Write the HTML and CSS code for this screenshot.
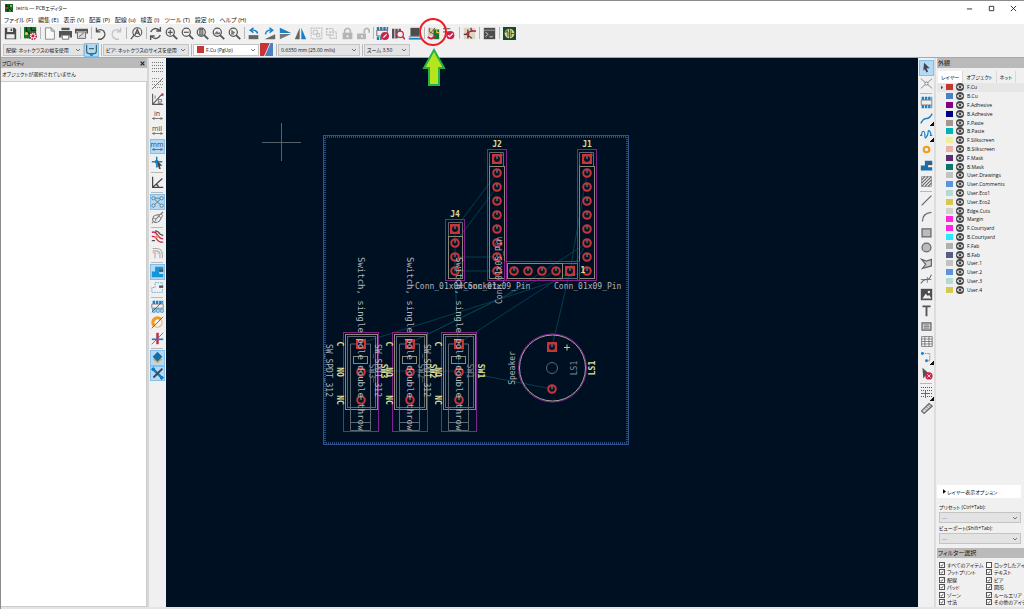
FILE: index.html
```html
<!DOCTYPE html>
<html lang="ja">
<head>
<meta charset="utf-8">
<title>tetris — PCBエディター</title>
<link rel="stylesheet" href="styles.css">
</head>
<body>
<svg class="defs" aria-hidden="true">
  <symbol id="lens" viewBox="0 0 16 16"><circle cx="6.5" cy="6.5" r="5" fill="none" stroke="#545454" stroke-width="1.5"/><path d="M10 10l5 5" stroke="#545454" stroke-width="2.2"/></symbol>
  <symbol id="eye" viewBox="0 0 16 16"><circle cx="8" cy="8" r="8" fill="#474747"/><path d="M1.500 8q6.500-8 13 0q-6.500 8-13 0z" fill="#f4f4f4"/><circle cx="8" cy="8" r="2.800" fill="#474747"/></symbol>
  <g id="pin"><circle r="3.8" fill="#06172a" stroke="#c93437" stroke-width="2"/><path d="M0-3V0" stroke="#8398a6" stroke-width="1"/></g>
  <g id="pin1"><rect x="-5" y="-5" width="10" height="10" fill="#c93437"/><circle r="3" fill="#06172a"/><path d="M0-3V0" stroke="#8398a6" stroke-width="1"/></g>
  <g id="switch">
    <rect x="-17.500" y="-11.500" width="35" height="99" fill="none" stroke="#84218f"/>
    <rect x="-15.500" y="-9.500" width="32" height="75" fill="none" stroke="#8a8978"/>
    <rect x="-13.500" y="-7.500" width="28" height="71" fill="none" stroke="#5e6670"/>
    <path d="M-10.500 0V86.500H9.500V0ZM-10.500 78.500H9.500" fill="none" stroke="#5e6670"/>
    <rect x="-7.500" y="12.500" width="14" height="7" fill="none" stroke="#8a8978"/>
    <use href="#pin1"/><use href="#pin" y="28"/><use href="#pin" y="56"/>
  </g>
  <g id="header9">
    <rect x="-9.500" y="-9.500" width="19" height="131" fill="none" stroke="#84218f"/>
    <rect x="-7.500" y="7.500" width="15" height="112" fill="none" stroke="#8a8978"/>
    <path d="M-7.500 7V-6.500H6.500V7M3-6.500L6.500-3" fill="none" stroke="#626a70"/>
    <use href="#pin1"/><use href="#pin" y="14"/><use href="#pin" y="28"/><use href="#pin" y="42"/><use href="#pin" y="56"/><use href="#pin" y="70"/><use href="#pin" y="84"/><use href="#pin" y="98"/><use href="#pin" y="112"/>
  </g>
</svg>

<div class="window">
<header class="titlebar">
  <svg class="logo" viewBox="0 0 16 16"><path fill="#176a29" d="M0 0h16v16H0z"/><path d="M3 1v5h4M9 1v4h5M2 10h4v5M8 8l6 6" stroke="#071d0c" stroke-width="2" fill="none"/><circle cx="4" cy="8" r="2" fill="#e53d2e"/><circle cx="12" cy="4" r="2" fill="#e8c840"/><circle cx="10" cy="13" r="2" fill="#37a64a"/></svg>
  <h1>tetris — PCBエディター</h1>
  <div class="winbtns">
    <button aria-label="最小化"><svg viewBox="0 0 8 8"><path d="M1 4.500h6" stroke="#222"/></svg></button>
    <button aria-label="最大化"><svg viewBox="0 0 8 8"><path d="M1.500 1.500h5v5h-5z" stroke="#222" fill="none"/></svg></button>
    <button aria-label="閉じる"><svg viewBox="0 0 8 8"><path d="M1 1l6 6M7 1L1 7" stroke="#222"/></svg></button>
  </div>
</header>
<nav class="menubar">
  <button>ファイル (F)</button><button>編集 (E)</button><button>表示 (V)</button><button>配置 (P)</button><button>配線 (u)</button><button>検査 (I)</button><button>ツール (T)</button><button>設定 (r)</button><button>ヘルプ (H)</button>
</nav>

<div class="toolbar main">
  <div class="group n1"><button aria-label="保存"><svg viewBox="0 0 16 16"><path d="M1 1h12l2 2v12H1z" fill="#4b4b4b"/><path d="M4 1h7v5H4zM3 9h10v5H3z" fill="#eee"/><path d="M8 2h2v3H8z" fill="#4b4b4b"/></svg></button></div><i></i>
  <div class="group n1"><button aria-label="基板の設定"><svg viewBox="0 0 16 16"><path d="M0 0h15v14H0z" fill="#19742b"/><path d="M3 0v5l4 3v6M9 0v4h6" stroke="#082d12" stroke-width="1.500" fill="none"/><circle cx="3" cy="8" r="2" fill="#e6c54f"/><circle cx="11" cy="11" r="4" fill="#fff" stroke="#c9234b" stroke-width="2" stroke-dasharray="2 1"/><circle cx="11" cy="11" r="2" fill="#c9234b"/></svg></button></div><i></i>
  <div class="group n3">
    <button aria-label="ページ設定"><svg viewBox="0 0 16 16"><path d="M3 1h7l4 4v10H3z" fill="#f8f8f8" stroke="#777"/><path d="M10 1v4h4" fill="none" stroke="#777"/></svg></button>
    <button aria-label="印刷"><svg viewBox="0 0 16 16"><path d="M3 1h10v3H3zM0 5h16v8h-3v-3H3v3H0z" fill="#545454"/><path d="M4 10h8v5H4z" fill="#fff" stroke="#545454"/></svg></button>
    <button aria-label="プロット"><svg viewBox="0 0 16 16"><path d="M0 2h16v6h-2V5H2v3H0z" fill="#545454"/><path d="M3 6h10v8H3z" fill="#ddd" stroke="#545454"/><path d="M5 12l6-5" stroke="#545454"/></svg></button>
  </div><i></i>
  <div class="group n2">
    <button aria-label="元に戻す"><svg viewBox="0 0 16 16"><path d="M3 1v5h5M3 6q4-5 9-1q4 6-3 10H5" fill="none" stroke="#555" stroke-width="1.700"/></svg></button>
    <button aria-label="やり直し"><svg viewBox="0 0 16 16"><path d="M13 1v5H8M13 6Q9 1 4 5q-4 6 3 10h4" fill="none" stroke="#c2c2c2" stroke-width="1.700"/></svg></button>
  </div><i></i>
  <div class="group n1"><button aria-label="検索"><svg viewBox="0 0 16 16"><circle cx="9" cy="6.500" r="5.500" fill="none" stroke="#555" stroke-width="1.300"/><path d="M5 10l-4 5M6 10l3-7 3 7M7 7.500h4" fill="none" stroke="#555" stroke-width="1.600"/></svg></button></div><i></i>
  <div class="group n6">
    <button aria-label="再描画"><svg viewBox="0 0 16 16"><path d="M2 6q4-7 11-2M14 0v5H9M14 10q-4 7-11 2M2 16v-5h5" fill="none" stroke="#555" stroke-width="1.700"/></svg></button>
    <button aria-label="拡大"><svg viewBox="0 0 16 16"><use href="#lens"/><path d="M3.500 6.500h6M6.500 3.500v6" stroke="#555" stroke-width="1.500"/></svg></button>
    <button aria-label="縮小"><svg viewBox="0 0 16 16"><use href="#lens"/><path d="M3.500 6.500h6" stroke="#555" stroke-width="1.500"/></svg></button>
    <button aria-label="全体表示"><svg viewBox="0 0 16 16"><use href="#lens"/><path d="M4.500 3h4v7h-4z" fill="#999" stroke="#555"/></svg></button>
    <button aria-label="オブジェクトに合わせる"><svg viewBox="0 0 16 16"><use href="#lens"/><path d="M3 8l3-3 2 2 2-1v3H3z" fill="#777"/></svg></button>
    <button aria-label="選択範囲を拡大"><svg viewBox="0 0 16 16"><use href="#lens"/><path d="M4 3l5 4-2 1 1 2-2-1-2 1z" fill="#777"/></svg></button>
  </div><i></i>
  <div class="group n8">
    <button aria-label="反時計回り"><svg viewBox="0 0 16 16"><path d="M2 15v-5h12v5z" fill="#666"/><path d="M13 8Q12 3 5 4M8 1L4 4l4 3" fill="none" stroke="#1a81c4" stroke-width="1.800"/></svg></button>
    <button aria-label="時計回り"><svg viewBox="0 0 16 16"><path d="M15 15V9L2 15z" fill="#666"/><path d="M3 9Q4 3 11 4M8 1l4 3-4 3" fill="none" stroke="#1a81c4" stroke-width="1.800"/></svg></button>
    <button aria-label="上下反転"><svg viewBox="0 0 16 16"><path d="M1 1l14 6.500H1z" fill="#1a81c4"/><path d="M1 15l14-6.500H1z" fill="#777"/></svg></button>
    <button aria-label="左右反転"><svg viewBox="0 0 16 16"><path d="M7 1v14H1z" fill="#666"/><path d="M9 1v14h6z" fill="#1a81c4"/></svg></button>
    <button aria-label="グループ化"><svg viewBox="0 0 16 16"><path d="M1.500 1.500h13v13h-13z" fill="none" stroke="#c0c0c0" stroke-width="1.500" stroke-dasharray="2 1"/><path d="M4 4h5v5H4zM8 8h4v4H8z" fill="none" stroke="#b8b8b8"/></svg></button>
    <button aria-label="グループ解除"><svg viewBox="0 0 16 16"><path d="M2 2h8v8H2zM6 6h8v8H6z" fill="none" stroke="#bdbdbd" stroke-width="1.500" stroke-dasharray="2 1"/></svg></button>
    <button aria-label="ロック"><svg viewBox="0 0 16 16"><path d="M4.500 8V4q3.500-5 7 0v4" fill="none" stroke="#b5b5b5" stroke-width="2"/><path d="M2 7h12v8H2z" fill="#b5b5b5"/><path d="M7 10h2v3H7z" fill="#eee"/></svg></button>
    <button aria-label="ロック解除"><svg viewBox="0 0 16 16"><path d="M9 8V4q3-5 6 0v3" fill="none" stroke="#b5b5b5" stroke-width="2"/><path d="M0 8h11v7H0z" fill="#b5b5b5"/><path d="M5 10h2v3H5z" fill="#eee"/></svg></button>
  </div><i></i>
  <div class="group n3">
    <button aria-label="フットプリントエディター"><svg viewBox="0 0 16 16"><path d="M1 2h14M1 14h6" stroke="#1a81c4" stroke-width="4" stroke-dasharray="3 1"/><path d="M1 4h13v7H1z" fill="none" stroke="#555"/><circle cx="11" cy="11" r="5" fill="#c9234b"/><path d="M9 13l4-4" stroke="#fff" stroke-width="1.500"/></svg></button>
    <button aria-label="ライブラリブラウザー"><svg viewBox="0 0 16 16"><path d="M0 2h3v12H0zM4 2h3v12H4zM8 2h3v7H8z" fill="#555"/><circle cx="10" cy="9" r="4" fill="#eee" stroke="#c9234b" stroke-width="1.500"/><path d="M13 12l3 3" stroke="#c9234b" stroke-width="2"/></svg></button>
    <button aria-label="3Dビューア"><svg viewBox="0 0 16 16"><path d="M3 1h11v10H3z" fill="#4c4c4c"/><path d="M1 12h14" stroke="#555"/><path d="M1 14.500h15" stroke="#1a81c4" stroke-width="2"/></svg></button>
  </div><i></i>
  <div class="group n2">
    <button aria-label="回路図から基板を更新"><svg viewBox="0 0 16 16"><path d="M1 1h9v10H1z" fill="#d8cdb2"/><path d="M3 1v5l6 3M10 1L4 8" stroke="#634a40" fill="none"/><path d="M8 3h7v12H8z" fill="#19742b"/><path d="M12 3v4h3" stroke="#e2ba3d" stroke-width="1.500" fill="none"/><path d="M1 12q5 5 8-1" stroke="#c9234b" stroke-width="2.500" fill="none"/></svg></button>
    <button aria-label="デザインルールチェック"><svg viewBox="0 0 16 16"><path d="M0 2h9M0 6h7" stroke="#777" stroke-width="1.500"/><circle cx="9" cy="10" r="5" fill="#c9234b"/><path d="M6 10l2 2 4-4" stroke="#fff" stroke-width="1.500" fill="none"/></svg></button>
  </div><i></i>
  <div class="group n1"><button aria-label="回路図エディター"><svg viewBox="0 0 16 16"><path d="M1 1h14v14H1z" fill="#ded5c2"/><path d="M1 9h4M6 3v11M6 7l6-3M6 10l5 4M10 1v4" stroke="#49382f" stroke-width="1.500"/><circle cx="6" cy="8" r="2" fill="#c9234b"/><path d="M10 5h6" stroke="#c9234b" stroke-width="2"/></svg></button></div><i></i>
  <div class="group n1"><button aria-label="スクリプトコンソール"><svg viewBox="0 0 16 16"><path d="M1 1h14v14H1z" fill="#4d4d4d"/><path d="M1 4h14" stroke="#aaa"/><path d="M3 6l3 3-3 3M8 12h4" stroke="#eee" fill="none"/></svg></button></div><i></i>
  <div class="group n1"><button aria-label="プラグイン"><svg viewBox="0 0 16 16"><path d="M0 0h16v16H0z" fill="#174a2d"/><circle cx="8" cy="8" r="6" fill="#d9cf8c"/><path d="M8 1v14M2 6h4v6M10 4v8M14 8h-4M5 3v3" stroke="#174a2d" fill="none"/></svg></button></div>
</div>

<div class="toolbar options">
  <select class="w-track" aria-label="配線幅"><option>配線: ネットクラスの幅を使用</option></select>
  <button class="on" aria-label="配線幅を自動選択"><svg viewBox="0 0 16 16"><path d="M2 2v8q0 3 3 3h6q3 0 3-3V2M5 7h6" fill="none" stroke="#466" stroke-width="1.500"/><circle cx="8" cy="14" r="2" fill="#1a81c4"/></svg></button><i></i>
  <select class="w-via" aria-label="ビアサイズ"><option>ビア: ネットクラスのサイズを使用</option></select><i></i>
  <select class="w-layer" aria-label="レイヤー"><option>F.Cu (PgUp)</option></select>
  <button aria-label="レイヤーペア"><svg viewBox="0 0 16 16"><path d="M0 0h12L5 16H0z" fill="#c83434"/><path d="M13 0h3v16H6z" fill="#4d7fc4"/></svg></button><i></i>
  <select class="w-grid" aria-label="グリッド"><option>0.6350 mm (25.00 mils)</option></select><i></i>
  <select class="w-zoom" aria-label="ズーム"><option>ズーム 3.50</option></select>
</div>

<div class="workspace">
  <aside class="properties">
    <h2>プロパティ<button aria-label="閉じる"><svg viewBox="0 0 8 8"><path d="M1 1l6 6M7 1L1 7" stroke="#222" stroke-width="1.800"/></svg></button></h2>
    <p>オブジェクトが選択されていません</p>
    <div class="grid-area"></div>
  </aside>

  <div class="toolbar side left">
    <div class="group n7">
      <button aria-label="グリッド表示"><svg viewBox="0 0 13 13"><path d="M1 1.500h11M1 4.500h11M1 7.500h11M1 10.500h11" stroke="#777" stroke-dasharray="1 1"/></svg></button>
      <button aria-label="グリッド上書き"><svg viewBox="0 0 13 13"><path d="M1 1.500h8M1 4.500h5M1 7.500h3M7 7.500h5M4 10.500h8M9 4.500h3" stroke="#888" stroke-dasharray="1 1"/><path d="M1 12L12 1" stroke="#777"/></svg></button>
      <button aria-label="極座標"><svg viewBox="0 0 16 16"><path d="M2 1v13h13M2 14L13 2" stroke="#555" fill="none" stroke-width="1.300"/><path d="M5 3v4M9 11h4V8H9v5h4" stroke="#666" fill="none"/><circle cx="14" cy="2" r="1.600" fill="#d33450"/></svg></button>
      <button class="unit" aria-label="インチ">in<svg viewBox="0 0 14 4"><path d="M0 2h14M3 0L1 2l2 2M11 0l2 2-2 2" stroke="#555" fill="none"/></svg></button>
      <button class="unit" aria-label="ミル">mil<svg viewBox="0 0 14 4"><path d="M0 2h14M3 0L1 2l2 2M11 0l2 2-2 2" stroke="#555" fill="none"/></svg></button>
      <button class="unit on" aria-label="ミリメートル">mm<svg viewBox="0 0 14 4"><path d="M0 2h14M3 0L1 2l2 2M11 0l2 2-2 2" stroke="#456" fill="none"/></svg></button>
      <button aria-label="フルカーソル"><svg viewBox="0 0 16 16"><path d="M7 1v13M1 7h13" stroke="#1a81c4" stroke-width="1.800"/><circle cx="7" cy="7" r="2.500" fill="#1a81c4"/><path d="M8 6l6 6-3 0 1 4-2 0-1-3-1 1z" fill="#444"/></svg></button>
    </div><i></i>
    <div class="group n1"><button aria-label="45度制限"><svg viewBox="0 0 16 16"><path d="M2 1v13h13M2 14L14 3M6 10q3 1 3 4" stroke="#444" fill="none" stroke-width="1.500"/></svg></button></div><i></i>
    <div class="group n2">
      <button class="on" aria-label="ラッツネスト"><svg viewBox="0 0 16 16"><path d="M3 4l10 9M13 4L3 13M3 4l10 0" stroke="#4e6c7b" fill="none"/><g fill="#cbe5f7" stroke="#4e6c7b"><circle cx="3" cy="4" r="2"/><circle cx="13" cy="4" r="2"/><circle cx="3" cy="13" r="2"/><circle cx="13" cy="13" r="2"/></g></svg></button>
      <button aria-label="曲線ラッツネスト"><svg viewBox="0 0 16 16"><path d="M2 12q0-7 5-7t7-3M4 14q8 1 9-8M1 15L15 1" stroke="#777" fill="none" stroke-width="1.300"/><circle cx="4" cy="11" r="2" fill="#eee" stroke="#777"/><circle cx="12" cy="6" r="2" fill="#eee" stroke="#777"/></svg></button>
    </div><i></i>
    <div class="group n2">
      <button aria-label="非アクティブ層"><svg viewBox="0 0 16 16"><path d="M1 3q4-2 7 3t7 5M1 8q4-1 6 3t8 4" stroke="#c9234b" stroke-width="1.600" fill="none"/><path d="M5 1q4 0 6 4l4 2M1 13h4" stroke="#555" stroke-width="1.600" fill="none"/><circle cx="7" cy="8" r="2" fill="#f0a33a"/></svg></button>
      <button aria-label="ネットハイライト"><svg viewBox="0 0 16 16"><path d="M2 3h5q7 0 7 8v4M2 6h4q5 0 5 5v4M5 8v7" stroke="#aaa" stroke-width="1.300" fill="none"/><path d="M7 9h8" stroke="#a3cce3"/><circle cx="4" cy="8" r="2" fill="#efc0a0"/></svg></button>
    </div><i></i>
    <div class="group n2">
      <button class="on" aria-label="ゾーン塗りつぶし"><svg viewBox="0 0 16 16"><path d="M5 2h10v5h-5v4h5v4H1V8h4z" fill="#1a94d8"/><path d="M10 7h5" stroke="#555" stroke-width="3"/></svg></button>
      <button aria-label="ゾーン外形"><svg viewBox="0 0 16 16"><path d="M5 2h9v4M14 10v4H1V8h4V2" fill="none" stroke="#5d9ec7" stroke-dasharray="2 1"/><path d="M10 7h5" stroke="#555" stroke-width="3"/></svg></button>
    </div><i></i>
    <div class="group n3">
      <button aria-label="パッド外形"><svg viewBox="0 0 16 16"><path d="M2 3h13" stroke="#1a81c4" stroke-width="4" stroke-dasharray="3 1"/><path d="M1 5h14v5H1z" fill="none" stroke="#777"/><path d="M2 11h3v4H2zM7 11h3v4H7zM12 11h3v4h-3z" fill="none" stroke="#1a81c4"/><path d="M1 15L15 1" stroke="#555"/></svg></button>
      <button aria-label="ビア外形"><svg viewBox="0 0 16 16"><path d="M4 12A5 5 0 1 1 12 4" fill="none" stroke="#f29b20" stroke-width="4"/><path d="M12 4A5 5 0 0 1 4 12" fill="none" stroke="#f0b870" stroke-width="1.500"/><path d="M1 15L15 1" stroke="#555"/></svg></button>
      <button aria-label="配線外形"><svg viewBox="0 0 16 16"><path d="M8 1v14" stroke="#c9234b" stroke-width="3"/><path d="M1 9h14" stroke="#1a81c4" stroke-width="2"/><path d="M1 15L15 1" stroke="#666"/></svg></button>
    </div><i></i>
    <div class="group n2">
      <button class="on" aria-label="外観パネル"><svg viewBox="0 0 16 16"><path d="M8 6l6 4-6 5-6-5z" fill="#e6a23c"/><path d="M8 1l6 6-6 6-6-6z" fill="#126fae"/></svg></button>
      <button class="on" aria-label="プロパティパネル"><svg viewBox="0 0 16 16"><path d="M2 2l12 12" stroke="#1678ba" stroke-width="3"/><path d="M14 2L3 13" stroke="#445" stroke-width="2.500"/><path d="M1 4l3-3M12 15l3-3" stroke="#1678ba" stroke-width="3"/></svg></button>
    </div>
  </div>

  <main class="canvas">
    <svg width="100%" height="100%" aria-label="tetris 基板">
      <g transform="translate(-166 -58)">
        <path d="M262 142.500h39M281.500 123v38" stroke="#56616b"/>
        <rect x="323.500" y="135.500" width="305" height="309" fill="none" stroke="#2f528b"/>
        <rect x="325" y="137" width="302" height="306" fill="none" stroke="#294a7d" stroke-width="2" stroke-dasharray="1 1"/>
        <g stroke="#063d4c" fill="none">
          <path d="M455 229L497 173M455 243L497 187M455 257H497M455 271H497M361 343L497 300L587 271M410 343L505 296L587 243M459 343L570 271L587 243M587 173L570 271L552 347M361 371H459L552 389M455 229V271L459 371M410 343L556 271"/>
        </g>
        <g transform="translate(497 159)"><use href="#header9"/></g>
        <g transform="translate(587 159)"><use href="#header9"/></g>
        <rect x="445.500" y="219.500" width="19" height="61" fill="none" stroke="#84218f"/>
        <rect x="448.500" y="236.500" width="14" height="42" fill="none" stroke="#8a8978"/>
        <path d="M448.500 236V222.500H462.500V236" fill="none" stroke="#626a70"/>
        <use href="#pin1" x="455" y="229"/><use href="#pin" x="455" y="243"/><use href="#pin" x="455" y="257"/><use href="#pin" x="455" y="271"/>
        <rect x="504.500" y="261.500" width="75" height="19" fill="none" stroke="#84218f"/>
        <rect x="507.500" y="263.500" width="55" height="15" fill="none" stroke="#8a8978"/>
        <path d="M563 263.500H577.500V278.500H563" fill="none" stroke="#626a70"/>
        <use href="#pin" x="514" y="271"/><use href="#pin" x="528" y="271"/><use href="#pin" x="542" y="271"/><use href="#pin" x="556" y="271"/><use href="#pin1" x="570" y="271"/>
        <text class="silk mid" x="497" y="147">J2</text>
        <text class="silk mid" x="587" y="147">J1</text>
        <text class="silk mid" x="455" y="217">J4</text>
        <text class="silk mid" x="583" y="273">1</text>
        <text class="fab" x="415" y="289">Conn_01x04_Socket</text>
        <text class="fab" x="463" y="289">Conn_01x09_Pin</text>
        <text class="fab" x="554" y="289">Conn_01x09_Pin</text>
        <text class="fab" transform="translate(502 304) rotate(-90)">Conn_01x05_Pin</text>

        <use href="#switch" x="361" y="344"/><use href="#switch" x="410" y="344"/><use href="#switch" x="459" y="344"/>
        <text class="fab desc" transform="translate(358 257) rotate(90)">Switch, single pole double throw</text>
        <text class="fab desc" transform="translate(407 257) rotate(90)">Switch, single pole double throw</text>
        <text class="fab desc" transform="translate(456 257) rotate(90)">Switch, single pole double throw</text>
        <text class="fab" transform="translate(326 344) rotate(90)">SW_SPDT_312</text>
        <text class="fab" transform="translate(375 344) rotate(90)">SW_SPDT_312</text>
        <text class="fab" transform="translate(424 344) rotate(90)">SW_SPDT_312</text>
        <text class="silk mid" transform="translate(337 344) rotate(90)">C</text>
        <text class="silk mid" transform="translate(337 372) rotate(90)">NO</text>
        <text class="silk mid" transform="translate(337 400) rotate(90)">NC</text>
        <text class="silk mid" transform="translate(386 344) rotate(90)">C</text>
        <text class="silk mid" transform="translate(386 372) rotate(90)">NO</text>
        <text class="silk mid" transform="translate(386 400) rotate(90)">NC</text>
        <text class="silk mid" transform="translate(435 344) rotate(90)">C</text>
        <text class="silk mid" transform="translate(435 372) rotate(90)">NO</text>
        <text class="silk mid" transform="translate(435 400) rotate(90)">NC</text>
        <text class="fab mid dim" transform="translate(369 371) rotate(90)">SW3</text>
        <text class="fab mid dim" transform="translate(418 371) rotate(90)">SW2</text>
        <text class="fab mid dim" transform="translate(467 371) rotate(90)">SW1</text>
        <text class="silk mid" transform="translate(381 371) rotate(90)">SW3</text>
        <text class="silk mid" transform="translate(430 371) rotate(90)">SW2</text>
        <text class="silk mid" transform="translate(478 371) rotate(90)">SW1</text>

        <circle cx="552.500" cy="368" r="34" fill="none" stroke="#84218f"/>
        <circle cx="552.500" cy="368" r="33" fill="none" stroke="#a8a299"/>
        <circle cx="552" cy="368" r="5.500" fill="none" stroke="#5e6670"/>
        <use href="#pin1" x="552" y="347"/><use href="#pin" x="552" y="389"/>
        <path d="M564 347.500h6M567 344.500v6" stroke="#c9c98c"/>
        <text class="fab mid" transform="translate(515 368) rotate(-90)">Speaker</text>
        <text class="fab mid dim" transform="translate(577 368) rotate(-90)">LS1</text>
        <text class="silk mid" transform="translate(595 368) rotate(-90)">LS1</text>
      </g>
    </svg>
  </main>

  <div class="toolbar side right">
    <div class="group n2">
      <button class="on" aria-label="選択"><svg viewBox="0 0 16 16"><path d="M5 2l7 7-4 0 2 4-2 1-2-4-2 2z" fill="#445"/></svg></button>
      <button aria-label="ローカルラッツネスト"><svg viewBox="0 0 16 16"><path d="M1 2l14 12M15 2L1 14" stroke="#777"/><circle cx="8" cy="8" r="2" fill="#eee" stroke="#777"/></svg></button>
    </div><i></i>
    <div class="group n6">
      <button aria-label="フットプリント配置"><svg viewBox="0 0 16 16"><path d="M2 3h13M2 13h13" stroke="#1a81c4" stroke-width="4" stroke-dasharray="3 1"/><path d="M1.500 5h13v6h-13z" fill="#eee" stroke="#777"/></svg></button>
      <button class="more" aria-label="配線"><svg viewBox="0 0 16 16"><path d="M1 14Q4 8 8 8T15 2" fill="none" stroke="#1a81c4" stroke-width="1.700"/></svg></button>
      <button class="more" aria-label="長さ調整"><svg viewBox="0 0 16 16"><path d="M0 9h2q0-5 2-5t2 5t2 2t2-6t2-1t1 5h2" fill="none" stroke="#1a81c4" stroke-width="1.500"/></svg></button>
      <button aria-label="ビア"><svg viewBox="0 0 16 16"><circle cx="8" cy="8" r="3.500" fill="none" stroke="#f29b20" stroke-width="2.500"/></svg></button>
      <button aria-label="ゾーン"><svg viewBox="0 0 16 16"><path d="M6 2h9v5h-5v3h5v4H1V8h5z" fill="#1a6eae"/><path d="M10 6h5" stroke="#555" stroke-width="3"/></svg></button>
      <button aria-label="禁止エリア"><svg viewBox="0 0 16 16"><path d="M2 2h12v12H2z" fill="none" stroke="#888"/><path d="M2 6l4-4M2 10l8-8M2 14L14 2M6 14l8-8M10 14l4-4" stroke="#666" stroke-width="1.400"/></svg></button>
    </div><i></i>
    <div class="group n12">
      <button aria-label="線"><svg viewBox="0 0 16 16"><path d="M2 14L14 2" stroke="#666" stroke-width="1.500"/></svg></button>
      <button aria-label="円弧"><svg viewBox="0 0 16 16"><path d="M3 14Q3 4 14 3" fill="none" stroke="#666" stroke-width="1.500"/></svg></button>
      <button aria-label="矩形"><svg viewBox="0 0 16 16"><path d="M2.500 3.500h11v10h-11z" fill="#bbb" stroke="#666" stroke-width="1.500"/></svg></button>
      <button aria-label="円"><svg viewBox="0 0 16 16"><circle cx="8" cy="8" r="5.500" fill="#bbb" stroke="#666" stroke-width="1.500"/></svg></button>
      <button aria-label="多角形"><svg viewBox="0 0 16 16"><path d="M2 3l6 2 6-2v8l-11 3 4-5z" fill="#ccc" stroke="#666" stroke-width="1.500"/></svg></button>
      <button aria-label="ベジェ"><svg viewBox="0 0 16 16"><path d="M1 13q3-5 7-5t6-6" fill="none" stroke="#666" stroke-width="1.300"/><path d="M1 8h13M9 5v7" stroke="#1a81c4"/></svg></button>
      <button aria-label="画像"><svg viewBox="0 0 16 16"><path d="M1 1h14v14H1z" fill="#4c4c4c"/><path d="M3 13l4-6 3 3 1-2 3 5z" fill="#eee"/><circle cx="11" cy="5" r="1.500" fill="#eee"/></svg></button>
      <button aria-label="テキスト"><svg viewBox="0 0 16 16"><path d="M3 3h10M8 3v12" stroke="#555" stroke-width="2.300"/></svg></button>
      <button aria-label="テキストボックス"><svg viewBox="0 0 16 16"><path d="M2.500 3.500h11v9h-11z" fill="#ccc" stroke="#666" stroke-width="1.500"/><path d="M5 6h6M5 8h6M5 10h6" stroke="#777"/></svg></button>
      <button aria-label="表"><svg viewBox="0 0 16 16"><path d="M2 2h13v12H2zM2 5h13M2 8h13M2 11h13M6 2v12M11 2v12" fill="#fff" stroke="#666"/></svg></button>
      <button class="more" aria-label="寸法"><svg viewBox="0 0 16 16"><path d="M3 3h9v9H8" fill="none" stroke="#777" stroke-dasharray="2 1"/><circle cx="3" cy="3" r="1.800" fill="#1a81c4"/><circle cx="8" cy="12" r="1.800" fill="#1a81c4"/></svg></button>
      <button aria-label="削除"><svg viewBox="0 0 16 16"><path d="M3 1l9 8-5 1-3 4z" fill="#555"/><circle cx="11" cy="11" r="4.500" fill="#c9234b"/><path d="M9 9l4 4M13 9l-4 4" stroke="#fff"/></svg></button>
    </div><i></i>
    <div class="group n2">
      <button class="more" aria-label="グリッド原点"><svg viewBox="0 0 13 13"><path d="M1 1.500h11M1 4.500h11M1 7.500h11M1 10.500h11" stroke="#555" stroke-dasharray="1 1"/><path d="M5.500 4v8M1 7.500h9" stroke="#1a81c4"/></svg></button>
      <button aria-label="計測"><svg viewBox="0 0 16 16"><path d="M2 11l9-9 4 3-10 9z" fill="#ddd" stroke="#666" stroke-width="1.500"/><path d="M6 8l2 2M8 6l2 2M10 4l2 2" stroke="#666"/></svg></button>
    </div>
  </div>

  <aside class="appearance">
    <h2>外観</h2>
    <div class="tabs"><button class="active">レイヤー</button><button>オブジェクト</button><button>ネット</button></div>
    <ul class="layers">
      <li class="current"><b class="c-fcu"></b><svg><use href="#eye"/></svg>F.Cu</li>
      <li><b class="c-blue"></b><svg><use href="#eye"/></svg>B.Cu</li>
      <li><b class="c-fadh"></b><svg><use href="#eye"/></svg>F.Adhesive</li>
      <li><b class="c-badh"></b><svg><use href="#eye"/></svg>B.Adhesive</li>
      <li><b class="c-fpaste"></b><svg><use href="#eye"/></svg>F.Paste</li>
      <li><b class="c-bpaste"></b><svg><use href="#eye"/></svg>B.Paste</li>
      <li><b class="c-fsilk"></b><svg><use href="#eye"/></svg>F.Silkscreen</li>
      <li><b class="c-bsilk"></b><svg><use href="#eye"/></svg>B.Silkscreen</li>
      <li><b class="c-fmask"></b><svg><use href="#eye"/></svg>F.Mask</li>
      <li><b class="c-bmask"></b><svg><use href="#eye"/></svg>B.Mask</li>
      <li><b class="c-grey"></b><svg><use href="#eye"/></svg>User.Drawings</li>
      <li><b class="c-sky"></b><svg><use href="#eye"/></svg>User.Comments</li>
      <li><b class="c-mint"></b><svg><use href="#eye"/></svg>User.Eco1</li>
      <li><b class="c-gold"></b><svg><use href="#eye"/></svg>User.Eco2</li>
      <li><b class="c-edge"></b><svg><use href="#eye"/></svg>Edge.Cuts</li>
      <li><b class="c-pink"></b><svg><use href="#eye"/></svg>Margin</li>
      <li><b class="c-pink"></b><svg><use href="#eye"/></svg>F.Courtyard</li>
      <li><b class="c-cyan"></b><svg><use href="#eye"/></svg>B.Courtyard</li>
      <li><b class="c-ffab"></b><svg><use href="#eye"/></svg>F.Fab</li>
      <li><b class="c-bfab"></b><svg><use href="#eye"/></svg>B.Fab</li>
      <li><b class="c-grey"></b><svg><use href="#eye"/></svg>User.1</li>
      <li><b class="c-sky"></b><svg><use href="#eye"/></svg>User.2</li>
      <li><b class="c-mint"></b><svg><use href="#eye"/></svg>User.3</li>
      <li><b class="c-gold"></b><svg><use href="#eye"/></svg>User.4</li>
    </ul>
    <button class="expander"><svg viewBox="0 0 4 6"><path d="M0 0l4 3-4 3z"/></svg>レイヤー表示オプション</button>
    <div class="presets">
      <label for="preset">プリセット (Ctrl+Tab):</label>
      <select id="preset"><option>---</option></select>
      <label for="viewport">ビューポート(Shift+Tab):</label>
      <select id="viewport"><option>---</option></select>
    </div>
    <h2>フィルター選択</h2>
    <div class="filters">
      <label><input type="checkbox" checked>すべてのアイテム</label><label><input type="checkbox">ロックしたアイテム</label>
      <label><input type="checkbox" checked>フットプリント</label><label><input type="checkbox" checked>テキスト</label>
      <label><input type="checkbox" checked>配線</label><label><input type="checkbox" checked>ビア</label>
      <label><input type="checkbox" checked>パッド</label><label><input type="checkbox" checked>図形</label>
      <label><input type="checkbox" checked>ゾーン</label><label><input type="checkbox" checked>ルールエリア</label>
      <label><input type="checkbox" checked>寸法</label><label><input type="checkbox" checked>その他のアイテム</label>
    </div>
  </aside>
</div>
<footer class="status"></footer>

<svg class="callout" viewBox="0 0 30 70" aria-hidden="true">
  <circle cx="14" cy="15" r="13" fill="none" stroke="#ee1c24" stroke-width="2"/>
  <path d="M15 33L25 51H20V68H10V51H5Z" fill="#b5e61d" stroke="#22b14c" stroke-width="2"/>
</svg>
</div>
</body>
</html>
```
FILE: styles.css
```css
* { box-sizing: border-box; }
html, body { height: 100%; margin: 0; }
body, button, select, input {
  font-family: "Open Sans", "Noto Sans CJK JP", sans-serif;
  font-size: 5px;
  line-height: 8px;
  font-feature-settings: "palt";
  color: #111;
}
button { border: 0; padding: 0; background: none; white-space: nowrap; }
svg { display: block; flex: none; }
h1, h2, p, ul { margin: 0; padding: 0; font-weight: 400; }
.defs { position: absolute; width: 0; height: 0; }

.window {
  position: relative;
  display: flex;
  flex-direction: column;
  height: 100vh;
  overflow: hidden;
  background: #f0f0f0;
  border-top: 1px solid #8c8c8c;
  border-left: 1px solid #8c8c8c;
}

.titlebar { display: flex; align-items: center; height: 14px; background: #fff; padding-left: 4px; gap: 3px; }
.titlebar h1 { font-size: 5px; flex: 1; }
.logo { width: 8px; height: 8px; }
.winbtns { display: flex; }
.winbtns button { width: 22px; display: grid; place-items: center; }
.winbtns svg { width: 7px; height: 7px; }

.menubar { display: flex; gap: 5px; height: 9px; padding-left: 3px; background: #fff; }
.menubar button { font-size: 6px; }

.toolbar { display: flex; align-items: center; background: #f0f0f0; }
.toolbar svg { width: 13px; height: 13px; }
.toolbar button { display: grid; place-items: center; }
.toolbar .on { background: #b3d9f5; box-shadow: inset 0 0 0 1px #84bfe9; }
.toolbar i { flex: none; background: linear-gradient(#b8b8b8, #b8b8b8) center no-repeat; }
.group { display: flex; flex: none; }
.group button { flex: 1; }

.main { height: 18px; padding-left: 1px; }
.main i { width: 4px; height: 12px; background-size: 1px 100%; }
.main .group button { height: 16px; }
.main .n1 { width: 16px; }
.main .n2 { width: 31px; }
.main .n3 { width: 47px; }
.main .n6 { width: 94px; }
.main .n8 { width: 125px; }

.options { height: 16px; padding-left: 2px; border-bottom: 1px solid #a8a8a8; }
.options i { width: 4px; height: 12px; background-size: 1px 100%; }
.options button { width: 15px; height: 14px; }

select {
  appearance: none;
  height: 12px;
  padding: 0 10px 0 2px;
  border: 1px solid #c4c4c4;
  border-radius: 0;
  font-size: 5px;
  background: #e3e3e3 url("data:image/svg+xml,%3Csvg xmlns='http://www.w3.org/2000/svg' viewBox='0 0 6 6'%3E%3Cpath d='M1 2l2 2 2-2' fill='none' stroke='%23555' stroke-width='.8'/%3E%3C/svg%3E") right 2px center / 6px 6px no-repeat;
}
.w-track { width: 81px; }
.w-via { width: 86px; }
.w-grid { width: 82px; }
.w-zoom { width: 46px; }
.options .w-layer {
  width: 66px;
  padding-left: 12px;
  background-color: #fff;
  background-image: linear-gradient(#c83434, #c83434), url("data:image/svg+xml,%3Csvg xmlns='http://www.w3.org/2000/svg' viewBox='0 0 6 6'%3E%3Cpath d='M1 2l2 2 2-2' fill='none' stroke='%23555' stroke-width='.8'/%3E%3C/svg%3E");
  background-position: 3px center, right 2px center;
  background-size: 7px 7px, 6px 6px;
}

.workspace { display: flex; flex: 1; min-height: 0; }
h2 { display: flex; align-items: center; justify-content: space-between; height: 10px; padding: 0 2px 0 1px; font-size: 5px; background: #bababa; }
.properties { display: flex; flex-direction: column; width: 146px; flex: none; }
.properties h2 svg { width: 5px; height: 5px; }
.properties p { height: 13px; padding: 2px 1px; }
.grid-area { flex: 1; background: #fff; border: 1px solid #ccc; border-left: 0; }

.side { flex-direction: column; flex: none; padding-top: 2px; }
.side i { width: 12px; height: 4px; background-size: 100% 1px; }
.side .group { flex-direction: column; }
.side .group button { width: 15px; min-height: 0; }
.side .n1 { height: 16px; }
.side .n2 { height: 31px; }
.side .n3 { height: 47px; }
.side .n6 { height: 94px; }
.side .n7 { height: 110px; }
.side .n12 { height: 188px; }
.left { width: 19px; padding-right: 1px; border-left: 2px solid #d6d6d6; }
.right { width: 18px; border-right: 2px solid #ddd; }
.toolbar .unit { align-content: center; font-size: 7px; line-height: 6px; color: #444; }
.toolbar .unit svg { width: 11px; height: 3px; }
.more { background: linear-gradient(135deg, transparent 50%, #111 50%) right bottom / 4px 4px no-repeat; }

.canvas { flex: 1; min-width: 0; overflow: hidden; background: #001023; }
.canvas text { font-family: "DejaVu Sans Mono", monospace; font-size: 8px; }
.canvas .desc { font-size: 9px; }
.fab { fill: #b0b4b8; }
.canvas .dim { fill: #7f8790; }
.canvas .silk { fill: #dcdc93; font-weight: 700; }
.mid { text-anchor: middle; }

.appearance { display: flex; flex-direction: column; width: 88px; flex: none; padding-left: 1px; overflow: hidden; }
.appearance h2 { flex: none; font-size: 6px; }
.tabs { display: flex; flex: none; align-items: end; height: 15px; padding-left: 1px; }
.tabs button { height: 12px; padding: 0 3px; border-right: 1px solid #d9d9d9; }
.tabs .active { background: #fff; }
.layers { display: flex; flex-direction: column; height: 211px; list-style: none; }
.layers li { display: flex; flex: 1; align-items: center; gap: 3px; padding-left: 9px; white-space: nowrap; }
.layers b { width: 7px; height: 6px; }
.layers svg { width: 8px; height: 8px; }
.layers .current { padding-left: 4px; background: #e6e6e6; }
.layers .current::before { content: ""; width: 2px; height: 4px; background: #3535e8; clip-path: polygon(0 0, 100% 50%, 0 100%); }
.c-fcu { background: #c83434; }
.c-blue { background: #4d7fc4; }
.c-fadh { background: #840084; }
.c-badh { background: #000084; }
.c-fpaste { background: #a59590; }
.c-bpaste { background: #00b4b4; }
.c-fsilk { background: #f2eda1; }
.c-bsilk { background: #e8b2a7; }
.c-fmask { background: #5c2b72; }
.c-bmask { background: #0b7567; }
.c-grey { background: #c2c2c2; }
.c-sky { background: #5994dc; }
.c-mint { background: #b4dbd2; }
.c-gold { background: #d8c852; }
.c-edge { background: #d0d2cd; }
.c-pink { background: #ff26e2; }
.c-cyan { background: #26e9ff; }
.c-ffab { background: #afafaf; }
.c-bfab { background: #585d84; }

.expander { display: flex; align-items: center; gap: 1px; height: 13px; margin-top: auto; padding-left: 6px; margin-right: 3px; background: #fff; text-align: left; }
.expander svg { width: 3px; height: 5px; }
.presets { display: flex; flex-direction: column; gap: 1px; padding: 5px 3px 4px 2px; }
.presets select { height: 11px; color: #666; }
.filters { display: grid; grid-template-columns: 47px 1fr; padding: 3px 0 1px 2px; }
.filters label { display: flex; align-items: center; gap: 2px; height: 7px; white-space: nowrap; }
.filters label:nth-child(4n) { height: 8px; }
.filters input { appearance: none; flex: none; width: 6px; height: 6px; margin: 0; border: 1px solid #555; background: #fff; }
.filters input:checked { background: #fff url("data:image/svg+xml,%3Csvg xmlns='http://www.w3.org/2000/svg' viewBox='0 0 6 6'%3E%3Cpath d='M1 3l1.500 2L5 1' fill='none' stroke='%23222'/%3E%3C/svg%3E") center / 100% no-repeat; }

.status { height: 2px; background: #e4e4e4; }
.callout { position: absolute; left: 418px; top: 16px; width: 30px; height: 70px; }
```
